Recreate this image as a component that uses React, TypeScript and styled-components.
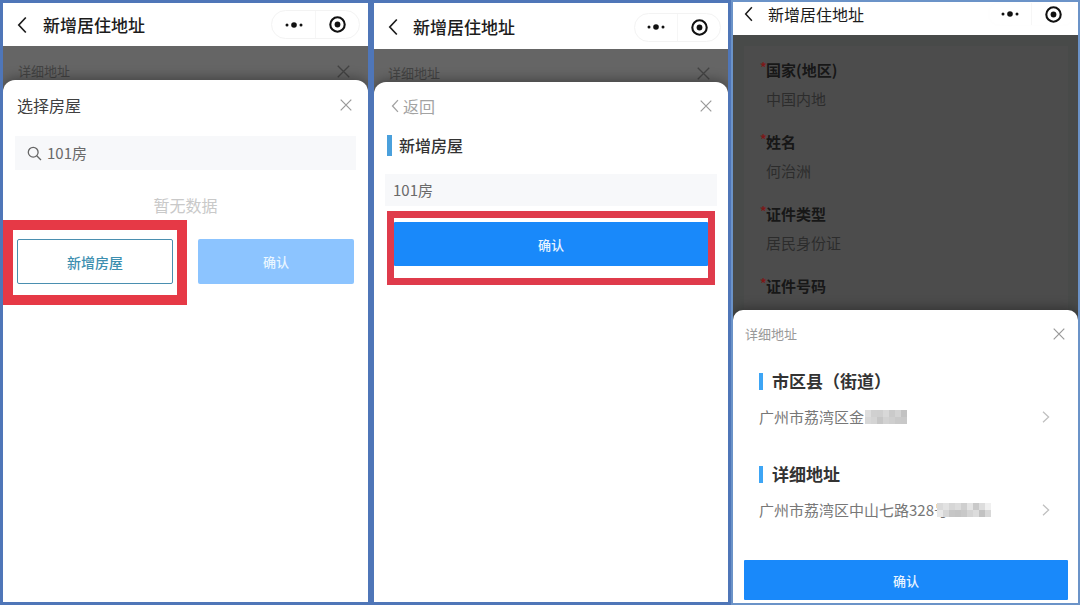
import React from 'react';
import styled, { createGlobalStyle } from 'styled-components';

const GlobalStyle = createGlobalStyle`
  *, *::before, *::after { box-sizing: border-box; }
  body {
    margin: 0;
    background: #fff;
    font-family: "Noto Sans CJK SC", "Noto Sans", sans-serif;
    color: #333;
  }
  h1, h2, h3, p, dl, dt, dd { margin: 0; font-weight: 400; }
  button, input { font: inherit; color: inherit; border: 0; padding: 0; background: none; }
  button { cursor: pointer; }
  svg { display: block; flex: none; }
`;

const Board = styled.main`
  display: grid;
  grid-template-columns: 371fr 360fr 349fr;
  min-height: 100vh;
`;

const Phone = styled.section<{ $edge: number; $line: string; $shade: string }>`
  display: flex;
  flex-direction: column;
  min-width: 0;
  border: ${p => p.$edge}px solid ${p => p.$line};
  background: ${p => p.$shade};
`;

const NavBar = styled.header<{ $height: number; $top?: number; $bottom?: number; $left?: number; $right: number }>`
  display: flex;
  align-items: center;
  height: ${p => p.$height}px;
  padding: ${p => p.$top ?? 0}px ${p => p.$right}px ${p => p.$bottom ?? 0}px ${p => p.$left ?? 14}px;
  background: #fff;
  color: #1c1c1c;
`;

const NavTitle = styled.h1<{ $size: number; $gap: number; $weight: number }>`
  flex: 1;
  margin-left: ${p => p.$gap}px;
  font-size: ${p => p.$size}px;
  font-weight: ${p => p.$weight};
  line-height: 24px;
`;

const Capsule = styled.div<{ $faint?: boolean; $width: number }>`
  display: flex;
  width: ${p => p.$width}px;
  height: ${p => (p.$faint ? 24 : 29)}px;
  border: 1px solid ${p => (p.$faint ? '#fefefe' : '#f3f3f3')};
  border-radius: 15px;
`;

const CapsuleButton = styled.button`
  flex: 1;
  display: grid;
  place-items: center;
  color: #111;
  & + & { border-left: 1px solid #f6f6f6; }
`;

const IconButton = styled.button`
  display: grid;
  place-items: center;
  flex: none;
`;

const Backdrop = styled.div<{ $height: number; $left: number; $right: number; $drop: number }>`
  display: flex;
  align-items: center;
  justify-content: space-between;
  height: ${p => p.$height}px;
  padding: ${p => p.$drop}px ${p => p.$right}px 0 ${p => p.$left}px;
  font-size: 13px;
  line-height: 18px;
  color: #434343;
`;

const Sheet = styled.section<{ $radius: number }>`
  flex: 1;
  display: flex;
  flex-direction: column;
  border-radius: ${p => p.$radius}px ${p => p.$radius}px 0 0;
  background: #fff;
  box-shadow: 0 -2px 12px rgba(0, 0, 0, 0.35);
  clip-path: inset(-20px 0 0 0);
`;

const SheetHead = styled.div<{ $height: number; $left: number; $right: number }>`
  display: flex;
  align-items: center;
  justify-content: space-between;
  height: ${p => p.$height}px;
  padding: 0 ${p => p.$right}px 0 ${p => p.$left}px;
  color: #999;
`;

const SheetTitle = styled.h2`
  font-size: 16px;
  line-height: 24px;
  color: #404040;
`;

const SheetCaption = styled.h2`
  font-size: 13px;
  line-height: 20px;
  color: #999;
`;

const BackLink = styled.button`
  display: flex;
  align-items: center;
  gap: 4px;
  font-size: 16px;
  line-height: 24px;
  color: #a3a3a3;
`;

const SearchBox = styled.label`
  display: flex;
  align-items: center;
  gap: 5px;
  height: 34px;
  margin: 6px 12px 0;
  padding: 0 12px;
  background: #f7f8fa;
  color: #666;
`;

const TextInput = styled.input`
  flex: 1;
  min-width: 0;
  outline: none;
  font-size: 15px;
  line-height: 24px;
  color: #6a6a6a;
`;

const NameBox = styled.label`
  display: flex;
  align-items: center;
  height: 32px;
  margin: 17px 11px 0;
  padding: 0 8px;
  background: #f7f8fa;
`;

const Empty = styled.p`
  margin-top: 23px;
  text-align: center;
  font-size: 16px;
  line-height: 24px;
  color: #c9c9c9;
`;

const Actions = styled.div`
  display: flex;
  align-items: center;
  gap: 11px;
  margin-top: 3px;
  padding-right: 14px;
`;

const WideMark = styled.div`
  flex: 1 1 28px;
  border: 10px solid #e63946;
  padding: 9px 4px 11px;
`;

const NarrowMark = styled.div`
  margin: 5px 13px 0;
  border: 7px solid #df3b4b;
  padding: 4px 0 12px;
`;

const Button = styled.button<{ $kind: 'outline' | 'muted' | 'solid'; $height: number }>`
  display: block;
  width: 100%;
  height: ${p => p.$height}px;
  border-radius: ${p => (p.$kind === 'solid' ? 1 : 2)}px;
  border: ${p => (p.$kind === 'outline' ? '1px solid #4a8fb0' : '0')};
  background: ${p => ({ outline: '#fff', muted: '#8cc4ff', solid: '#1989fa' })[p.$kind]};
  color: ${p => ({ outline: '#3d8fb0', muted: '#e9f6ff', solid: '#e8f4ff' })[p.$kind]};
  font-size: ${p => (p.$kind === 'outline' ? 14 : 13)}px;
  font-weight: 500;
`;

const ActionSlot = styled.div`
  flex: 1 1 0;
  padding-bottom: 2px;
`;

const BarTitle = styled.h2<{ $strong?: boolean }>`
  display: flex;
  align-items: center;
  gap: ${p => (p.$strong ? 9 : 7)}px;
  font-size: ${p => (p.$strong ? 17 : 16)}px;
  font-weight: ${p => (p.$strong ? 700 : 500)};
  line-height: 24px;
  color: #333;
  &::before {
    content: "";
    width: ${p => (p.$strong ? 4 : 5)}px;
    height: ${p => (p.$strong ? 17 : 21)}px;
    background: ${p => (p.$strong ? '#3da5f5' : '#4aa0dc')};
  }
`;

const TitleRow = styled.div`
  padding: 4px 13px 0;
`;

const DimForm = styled.div`
  height: 275px;
  padding: 11px 10px 0 11px;
  overflow: hidden;
`;

const DimCard = styled.dl`
  height: 100%;
  padding: 10px 16px 0;
  background: #4c4c4c;
`;

const Field = styled.div`
  height: 72px;
  padding-left: 6px;
  font-size: 15px;
`;

const FieldName = styled.dt`
  position: relative;
  line-height: 28px;
  font-weight: 700;
  color: #171717;
  &::before {
    content: "*";
    position: absolute;
    left: -6px;
    top: -3px;
    font-size: 13px;
    color: #7d1818;
  }
`;

const FieldValue = styled.dd`
  line-height: 30px;
  color: #2c2c2c;
`;

const AddressList = styled.div`
  flex: 1;
  padding: 11px 28px 0 26px;
`;

const AddressBlock = styled.div`
  height: 93px;
`;

const AddressRow = styled.button`
  display: flex;
  align-items: center;
  width: 100%;
  height: 24px;
  margin-top: 12px;
  font-size: 15px;
  line-height: 24px;
  text-align: left;
  color: #777;
  white-space: nowrap;
`;

const AddressText = styled.span`
  flex: 1;
  display: flex;
  align-items: center;
`;

const Mask = styled.span<{ $pull: number }>`
  position: relative;
  margin-left: ${p => p.$pull}px;
`;

const Footer = styled.div`
  padding: 5px 10px 3px 11px;
`;

const Back = ({ w = 10, h = 18, stroke = 1.7 }: { w?: number; h?: number; stroke?: number }) => (
  <svg width={w} height={h} viewBox="0 0 10 18" fill="none" stroke="currentColor" strokeWidth={stroke}>
    <path d="M8.8 1.5 1.8 9l7 7.5" />
  </svg>
);

const Forward = () => (
  <svg width="8" height="12" viewBox="0 0 8 12" fill="none" stroke="#c0c0c0" strokeWidth="1.3">
    <path d="m1 .8 5.6 5.2L1 11.2" />
  </svg>
);

const Cross = ({ size }: { size: number }) => (
  <svg width={size} height={size} viewBox="0 0 12 12" fill="none" stroke="currentColor" strokeWidth="1.2">
    <path d="m.7.7 10.6 10.6M11.3.7.7 11.3" />
  </svg>
);

const Dots = () => (
  <svg width="18" height="6" viewBox="0 0 18 6" fill="currentColor">
    <circle cx="2" cy="3" r="1.5" />
    <circle cx="9" cy="3" r="2.8" />
    <circle cx="16" cy="3" r="1.5" />
  </svg>
);

const Target = () => (
  <svg width="17" height="17" viewBox="0 0 17 17">
    <circle cx="8.5" cy="8.5" r="7.2" fill="none" stroke="currentColor" strokeWidth="2.1" />
    <circle cx="8.5" cy="8.5" r="2.9" fill="currentColor" />
  </svg>
);

const Magnifier = () => (
  <svg width="15" height="15" viewBox="0 0 15 15" fill="none" stroke="currentColor" strokeWidth="1.3">
    <circle cx="6.2" cy="6.2" r="4.9" />
    <path d="m9.7 9.7 4.3 4.3" />
  </svg>
);

const Mosaic = ({ tones }: { tones: string[][] }) => (
  <svg width={tones[0].length * 6} height="14" viewBox={`0 0 ${tones[0].length * 6} 14`} shapeRendering="crispEdges">
    {tones.map((row, y) =>
      row.map((tone, x) => <rect key={`${x}-${y}`} x={x * 6} y={y * 7} width="6" height="7" fill={tone} />),
    )}
  </svg>
);

const districtTones = [
  ['#dedede', '#d0d0d0', '#cfcfcf', '#d8d8d8', '#cacaca', '#d3d3d3', '#c2c2c2'],
  ['#d8d8d8', '#d4d4d4', '#c6c6c6', '#d2d2d2', '#cecece', '#c9c9c9', '#c8c8c8'],
];

const streetTones = [
  ['#dadada', '#e2e2e2', '#d6d6d6', '#dcdcdc', '#cfcfcf', '#e4e4e4', '#c9c9c9', '#dddddd', '#f0f0f0'],
  ['#e8e8e8', '#d6d6d6', '#c6c6c6', '#c4c4c4', '#c8c8c8', '#d4d4d4', '#dcdcdc', '#c2c2c2', '#d8d8d8'],
];

const fields = [
  { name: '国家(地区)', value: '中国内地' },
  { name: '姓名', value: '何治洲' },
  { name: '证件类型', value: '居民身份证' },
  { name: '证件号码', value: '' },
];

const Menu = ({ faint, width = 87 }: { faint?: boolean; width?: number }) => (
  <Capsule $faint={faint} $width={width}>
    <CapsuleButton aria-label="更多"><Dots /></CapsuleButton>
    <CapsuleButton aria-label="关闭小程序"><Target /></CapsuleButton>
  </Capsule>
);

const SelectHouse = () => (
  <Phone $edge={3} $line="#4f76b8" $shade="#656565">
    <NavBar $height={43} $right={8}>
      <IconButton aria-label="返回"><Back /></IconButton>
      <NavTitle $size={17} $gap={16} $weight={500}>新增居住地址</NavTitle>
      <Menu width={89} />
    </NavBar>
    <Backdrop $height={34} $left={15} $right={18} $drop={16}>
      <span>详细地址</span>
      <IconButton aria-label="关闭详细地址"><Cross size={13} /></IconButton>
    </Backdrop>
    <Sheet $radius={12}>
      <SheetHead $height={50} $left={14} $right={16}>
        <SheetTitle>选择房屋</SheetTitle>
        <IconButton aria-label="关闭"><Cross size={12} /></IconButton>
      </SheetHead>
      <SearchBox>
        <Magnifier />
        <TextInput aria-label="搜索房屋" defaultValue="101房" />
      </SearchBox>
      <Empty>暂无数据</Empty>
      <Actions>
        <WideMark><Button $kind="outline" $height={45}>新增房屋</Button></WideMark>
        <ActionSlot><Button $kind="muted" $height={45}>确认</Button></ActionSlot>
      </Actions>
    </Sheet>
  </Phone>
);

const AddHouse = () => (
  <Phone $edge={3} $line="#4f76b8" $shade="#656565">
    <NavBar $height={46} $top={2} $right={7}>
      <IconButton aria-label="返回"><Back /></IconButton>
      <NavTitle $size={17} $gap={15} $weight={500}>新增居住地址</NavTitle>
      <Menu />
    </NavBar>
    <Backdrop $height={33} $left={14} $right={18} $drop={15}>
      <span>详细地址</span>
      <IconButton aria-label="关闭详细地址"><Cross size={13} /></IconButton>
    </Backdrop>
    <Sheet $radius={12}>
      <SheetHead $height={47} $left={17} $right={16}>
        <BackLink><Back w={8} h={14} />返回</BackLink>
        <IconButton aria-label="关闭"><Cross size={12} /></IconButton>
      </SheetHead>
      <TitleRow><BarTitle>新增房屋</BarTitle></TitleRow>
      <NameBox><TextInput aria-label="房屋名称" defaultValue="101房" /></NameBox>
      <NarrowMark><Button $kind="solid" $height={44}>确认</Button></NarrowMark>
    </Sheet>
  </Phone>
);

const ConfirmAddress = () => (
  <Phone $edge={2} $line="#6b93c8" $shade="#484a49">
    <NavBar $height={33} $bottom={9} $left={11} $right={3}>
      <IconButton aria-label="返回"><Back w={9} h={16} /></IconButton>
      <NavTitle $size={16} $gap={15} $weight={400}>新增居住地址</NavTitle>
      <Menu faint />
    </NavBar>
    <DimForm>
      <DimCard>
        {fields.map(f => (
          <Field key={f.name}>
            <FieldName>{f.name}</FieldName>
            <FieldValue>{f.value}</FieldValue>
          </Field>
        ))}
      </DimCard>
    </DimForm>
    <Sheet $radius={10}>
      <SheetHead $height={48} $left={12} $right={13}>
        <SheetCaption>详细地址</SheetCaption>
        <IconButton aria-label="关闭"><Cross size={12} /></IconButton>
      </SheetHead>
      <AddressList>
        <AddressBlock>
          <BarTitle $strong>市区县（街道）</BarTitle>
          <AddressRow>
            <AddressText>
              广州市荔湾区金
              <Mask $pull={1}><Mosaic tones={districtTones} /></Mask>
            </AddressText>
            <Forward />
          </AddressRow>
        </AddressBlock>
        <AddressBlock>
          <BarTitle $strong>详细地址</BarTitle>
          <AddressRow>
            <AddressText>
              广州市荔湾区中山七路328号
              <Mask $pull={-12}><Mosaic tones={streetTones} /></Mask>
            </AddressText>
            <Forward />
          </AddressRow>
        </AddressBlock>
      </AddressList>
      <Footer><Button $kind="solid" $height={40}>确认</Button></Footer>
    </Sheet>
  </Phone>
);

export default function App() {
  return (
    <>
      <GlobalStyle />
      <Board>
        <SelectHouse />
        <AddHouse />
        <ConfirmAddress />
      </Board>
    </>
  );
}
